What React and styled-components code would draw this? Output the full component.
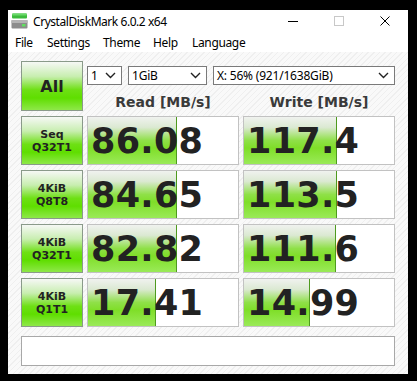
import React from "react";
import styled, { createGlobalStyle } from "styled-components";

const Global = createGlobalStyle`
  html, body { margin: 0; padding: 0; background: #000; }
  #root { width: 417px; height: 381px; }
`;

const Screen = styled.div`
  width: 417px;
  height: 381px;
  box-sizing: border-box;
  background: #000;
  padding: 10px 9px 7px 8px;
`;

const Window = styled.div`
  width: 400px;
  height: 364px;
  background: #fff;
  display: flex;
  flex-direction: column;
  font-family: "Noto Sans", "DejaVu Sans", sans-serif;
`;

const TitleBar = styled.div`
  height: 22px;
  display: flex;
  align-items: center;
  padding-left: 3px;
  font-size: 12px;
  color: #000;
`;

const TitleText = styled.span`
  margin-left: 5px;
  flex: 1;
  letter-spacing: -0.45px;
`;

const WinButton = styled.div`
  width: 46px;
  height: 22px;
  display: flex;
  align-items: center;
  justify-content: center;
`;

const MenuBar = styled.div`
  height: 20px;
  display: flex;
  align-items: center;
  padding-left: 7px;
  font-size: 12px;
  color: #000;
  letter-spacing: -0.35px;
`;

const MenuItem = styled.span`
  width: ${(p) => (p.$w ? `${p.$w}px` : "auto")};
`;

const Content = styled.div`
  flex: 1;
  background-color: #f9f9f9;
  background-image: repeating-linear-gradient(
    -45deg,
    #f9f9f9 0px,
    #f9f9f9 3px,
    #efefef 3px,
    #efefef 4px
  );
  padding: 9px 0 0 13px;
`;

const Grid = styled.div`
  display: grid;
  grid-template-columns: 62px 152px 152px;
  grid-template-rows: 50px repeat(4, 49px);
  column-gap: 4px;
  row-gap: 5px;
`;

const GreenButton = styled.div`
  box-sizing: border-box;
  border: 1px solid #8a9a8a;
  background: linear-gradient(
    to bottom,
    #f6f8f5 0%,
    #c8eeb0 30%,
    #6ee014 58%,
    #5fde00 75%,
    #8ee848 100%
  );
  display: flex;
  flex-direction: column;
  align-items: center;
  justify-content: center;
  font-family: "DejaVu Sans", Verdana, sans-serif;
  font-weight: bold;
  color: #222;
  font-size: ${(p) => (p.$big ? 16 : 11)}px;
  line-height: 13px;
  text-align: center;
`;

const TopArea = styled.div`
  grid-column: 2 / 4;
  display: flex;
  flex-direction: column;
`;

const ComboRow = styled.div`
  display: flex;
  gap: 6px;
  margin-top: 5px;
`;

const Combo = styled.div`
  box-sizing: border-box;
  width: ${(p) => p.$w}px;
  height: 19px;
  border: 1px solid #7a7a7a;
  background: #fff;
  display: flex;
  align-items: center;
  justify-content: space-between;
  padding: 0 5px 0 3px;
  font-size: 12px;
  letter-spacing: -0.2px;
  color: #000;
  white-space: nowrap;
`;

const HeaderRow = styled.div`
  display: grid;
  grid-template-columns: 152px 152px;
  column-gap: 4px;
  margin-top: 9px;
`;

const Header = styled.div`
  text-align: center;
  font-family: "DejaVu Sans", Verdana, sans-serif;
  font-weight: bold;
  font-size: 14px;
  color: #3a3a3a;
`;

const Cell = styled.div`
  position: relative;
  box-sizing: border-box;
  border: 1px solid #c2c2c2;
  background: #fff;
  overflow: hidden;
`;

const Bar = styled.div`
  position: absolute;
  left: 0;
  top: 0;
  bottom: 0;
  border-right: 1px solid #4e9a1e;
  background: linear-gradient(
    to bottom,
    #f0f2ef 0%,
    #dbe9d2 22%,
    #8fe048 50%,
    #7fde28 66%,
    #9aea58 100%
  );
`;

const Value = styled.div`
  position: relative;
  height: 100%;
  display: flex;
  align-items: center;
  padding-left: 3px;
  font-family: "DejaVu Sans", Verdana, sans-serif;
  font-weight: bold;
  font-size: 35px;
  color: #222;
  letter-spacing: 0.3px;
`;

const Comment = styled.div`
  box-sizing: border-box;
  width: 374px;
  height: 30px;
  margin-top: 9px;
  border: 1px solid #a8a8a8;
  background: #fff;
`;

const Chevron = () => (
  <svg width="11" height="7" viewBox="0 0 11 7">
    <polyline points="1,1 5.5,5.5 10,1" fill="none" stroke="#222" strokeWidth="1.4" />
  </svg>
);

const AppIcon = () => (
  <svg width="17" height="16" viewBox="0 0 17 16">
    <rect x="1" y="0.5" width="15" height="5" rx="1" fill="#3dbb3d" />
    <rect x="1" y="0.5" width="15" height="2" rx="1" fill="#6ad86a" />
    <rect x="0.5" y="7" width="16" height="8.5" rx="1" fill="#8c8c8c" />
    <rect x="0.5" y="7" width="16" height="3" fill="#b4b4b4" />
    <rect x="11" y="11" width="3.5" height="2.5" fill="#5fe05f" />
  </svg>
);

const rows = [
  { l1: "Seq", l2: "Q32T1", r: "86.08", w: "117.4" },
  { l1: "4KiB", l2: "Q8T8", r: "84.65", w: "113.5" },
  { l1: "4KiB", l2: "Q32T1", r: "82.82", w: "111.6" },
  { l1: "4KiB", l2: "Q1T1", r: "17.41", w: "14.99" },
];

const barWidth = (v) => Math.round(30 * Math.log10(parseFloat(v) * 10));

const Score = ({ v }) => (
  <Cell>
    <Bar style={{ width: barWidth(v) }} />
    <Value>{v}</Value>
  </Cell>
);

export default function App() {
  return (
    <>
      <Global />
      <Screen>
        <Window>
          <TitleBar>
            <AppIcon />
            <TitleText>CrystalDiskMark 6.0.2 x64</TitleText>
            <WinButton>
              <svg width="10" height="1"><rect width="10" height="1" fill="#000" /></svg>
            </WinButton>
            <WinButton>
              <svg width="10" height="10"><rect x="0.5" y="0.5" width="9" height="9" fill="none" stroke="#c8c8c8" /></svg>
            </WinButton>
            <WinButton>
              <svg width="10" height="10" viewBox="0 0 10 10">
                <path d="M0.5 0.5 L9.5 9.5 M9.5 0.5 L0.5 9.5" stroke="#000" strokeWidth="1" />
              </svg>
            </WinButton>
          </TitleBar>
          <MenuBar>
            <MenuItem $w={32}>File</MenuItem>
            <MenuItem $w={56}>Settings</MenuItem>
            <MenuItem $w={50}>Theme</MenuItem>
            <MenuItem $w={39}>Help</MenuItem>
            <MenuItem>Language</MenuItem>
          </MenuBar>
          <Content>
            <Grid>
              <GreenButton $big>All</GreenButton>
              <TopArea>
                <ComboRow>
                  <Combo $w={35}>1<Chevron /></Combo>
                  <Combo $w={79}>1GiB<Chevron /></Combo>
                  <Combo $w={182}>X: 56% (921/1638GiB)<Chevron /></Combo>
                </ComboRow>
                <HeaderRow>
                  <Header>Read [MB/s]</Header>
                  <Header>Write [MB/s]</Header>
                </HeaderRow>
              </TopArea>
              {rows.map((r, i) => (
                <React.Fragment key={i}>
                  <GreenButton>
                    <span>{r.l1}</span>
                    <span>{r.l2}</span>
                  </GreenButton>
                  <Score v={r.r} />
                  <Score v={r.w} />
                </React.Fragment>
              ))}
            </Grid>
            <Comment />
          </Content>
        </Window>
      </Screen>
    </>
  );
}
